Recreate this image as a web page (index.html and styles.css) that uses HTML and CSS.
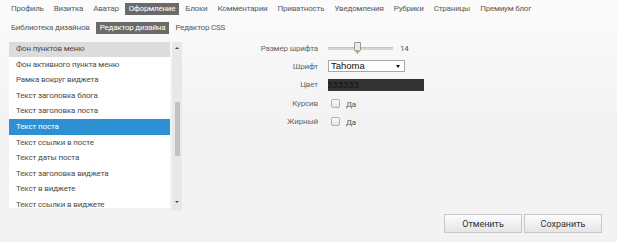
FILE: index.html
```html
<!DOCTYPE html>
<html lang="ru">
<head>
    <meta charset="UTF-8">
    <title>Редактор дизайна</title>
    <link rel="stylesheet" href="styles.css">
</head>
<body>
    <div class="tabs">
        <a href="#">Профиль</a>
        <a href="#">Визитка</a>
        <a href="#">Аватар</a>
        <a href="#" class="active">Оформление</a>
        <a href="#">Блоки</a>
        <a href="#">Комментарии</a>
        <a href="#">Приватность</a>
        <a href="#">Уведомления</a>
        <a href="#">Рубрики</a>
        <a href="#">Страницы</a>
        <a href="#">Премиум блог</a>
    </div>
    <div class="tabs subtabs">
        <a href="#">Библиотека дизайнов</a>
        <a href="#" class="active">Редактор дизайна</a>
        <a href="#">Редактор CSS</a>
    </div>

    <div class="editor">
        <div class="list-box">
            <div class="list">
                <ul class="items">
                    <li class="hover">Фон пунктов меню</li>
                    <li>Фон активного пункта меню</li>
                    <li>Рамка вокруг виджета</li>
                    <li>Текст заголовка блога</li>
                    <li>Текст заголовка поста</li>
                    <li class="selected">Текст поста</li>
                    <li>Текст ссылки в посте</li>
                    <li>Текст даты поста</li>
                    <li>Текст заголовка виджета</li>
                    <li>Текст в виджете</li>
                    <li>Текст ссылки в виджете</li>
                </ul>
            </div>
            <div class="scrollbar">
                <span class="arrow up"></span>
                <span class="thumb"></span>
                <span class="arrow down"></span>
            </div>
        </div>

        <div class="props">
            <label>Размер шрифта</label>
            <div class="field">
                <div class="slider">
                    <div class="track"></div>
                    <svg class="knob" width="7" height="12" viewBox="0 0 7 12">
                        <path d="M0.5 0.5 H6.5 V8 L3.5 11.5 L0.5 8 Z" fill="#ececec" stroke="#9a9a9a"/>
                        <path d="M1 8 L3.5 10.8 L6 8 Z" fill="#7fbf5a"/>
                    </svg>
                </div>
                <span class="value">14</span>
            </div>

            <label>Шрифт</label>
            <div class="field">
                <div class="select">Tahoma<span class="caret"></span></div>
            </div>

            <label>Цвет</label>
            <div class="field">
                <div class="color">333333</div>
            </div>

            <label>Курсив</label>
            <div class="field">
                <span class="check"></span><span class="yes">Да</span>
            </div>

            <label>Жирный</label>
            <div class="field">
                <span class="check"></span><span class="yes">Да</span>
            </div>
        </div>
    </div>

    <div class="actions">
        <button type="button">Отменить</button>
        <button type="button">Сохранить</button>
    </div>
</body>
</html>
```
FILE: styles.css
```css
body {
    margin: 0;
    font-family: 'Roboto', 'Liberation Sans', sans-serif;
    font-size: 8px;
    letter-spacing: -0.15px;
    color: #555;
    background: linear-gradient(to bottom, #fbfbfb 0, #f3f3f3 120px);
    height: 242px;
}
.tabs {
    display: flex;
    gap: 2px;
    padding: 3px 0 0 7px;
    letter-spacing: -0.2px;
}
.tabs a {
    display: block;
    height: 12px;
    line-height: 12px;
    padding: 0 4px;
    color: #5a5a5a;
    text-decoration: none;
}
.tabs a.active {
    background-color: #6a6a6a;
    color: #fff;
}
.subtabs {
    padding-top: 7px;
}
.editor {
    display: flex;
    margin-top: 5px;
}
.list-box {
    display: flex;
    margin: 3px 0 0 9px;
}
.list {
    width: 161px;
    height: 166px;
    background-color: #fff;
    overflow: hidden;
}
.items {
    list-style: none;
    margin: -1px 0 0 0;
    padding: 0;
}
.items li {
    height: 15.6px;
    line-height: 15.6px;
    padding-left: 7px;
    color: #4a4a4a;
    white-space: nowrap;
}
.items li.hover {
    background-color: #dcdcdc;
}
.items li.selected {
    background-color: #2c90d2;
    color: #fff;
}
.scrollbar {
    width: 10px;
    height: 169px;
    margin-left: 2px;
    background-color: #e8e8e8;
    display: flex;
    flex-direction: column;
    align-items: center;
}
.arrow {
    width: 0;
    height: 0;
    border-left: 2px solid transparent;
    border-right: 2px solid transparent;
}
.arrow.up {
    margin-top: 5px;
    border-bottom: 2px solid #444;
}
.arrow.down {
    margin-top: 45px;
    border-top: 2px solid #444;
}
.thumb {
    width: 5px;
    height: 54px;
    margin-top: 53px;
    background-color: #c2c2c2;
}
.props {
    display: grid;
    grid-template-columns: 80px auto;
    grid-auto-rows: 18.3px;
    column-gap: 10px;
    margin-left: 56px;
    align-items: center;
}
.props label {
    text-align: right;
    color: #666;
}
.field {
    display: flex;
    align-items: center;
}
.slider {
    position: relative;
    width: 65px;
    height: 12px;
    display: flex;
    align-items: center;
}
.track {
    width: 100%;
    height: 2px;
    background-color: #d6d6d6;
    border-top: 1px solid #c4c4c4;
}
.knob {
    position: absolute;
    left: 26px;
    top: 0;
}
.value {
    margin-left: 7px;
    color: #555;
}
.select {
    position: relative;
    box-sizing: border-box;
    width: 77px;
    height: 12px;
    line-height: 10px;
    border: 1px solid #a8a8a8;
    background-color: #fff;
    padding-left: 2px;
    font-family: 'Liberation Sans', sans-serif;
    font-size: 9.5px;
    letter-spacing: 0;
    color: #111;
}
.caret {
    position: absolute;
    right: 4px;
    top: 4px;
    width: 0;
    height: 0;
    border-left: 2px solid transparent;
    border-right: 2px solid transparent;
    border-top: 3px solid #111;
}
.color {
    box-sizing: border-box;
    width: 96px;
    height: 12px;
    line-height: 12px;
    background-color: #333;
    text-indent: -1px;
    font-family: 'Liberation Sans', sans-serif;
    font-size: 9.5px;
    letter-spacing: 0;
    color: #111;
    overflow: hidden;
}
.check {
    box-sizing: border-box;
    width: 9px;
    height: 9px;
    margin-left: 3px;
    border: 1px solid #b0b0b0;
    border-radius: 2px;
    background: linear-gradient(#fdfdfd, #e4e4e4);
}
.yes {
    margin-left: 6px;
    margin-top: 2px;
    color: #555;
}
.actions {
    display: flex;
    justify-content: flex-end;
    gap: 2px;
    padding-right: 15px;
    margin-top: 3px;
}
.actions button {
    width: 78px;
    height: 19px;
    border: 1px solid #c8c8c8;
    background: linear-gradient(#fcfcfc, #e5e5e5);
    font-family: 'Roboto', 'Liberation Sans', sans-serif;
    font-size: 9px;
    color: #333;
    padding: 0;
}
```
